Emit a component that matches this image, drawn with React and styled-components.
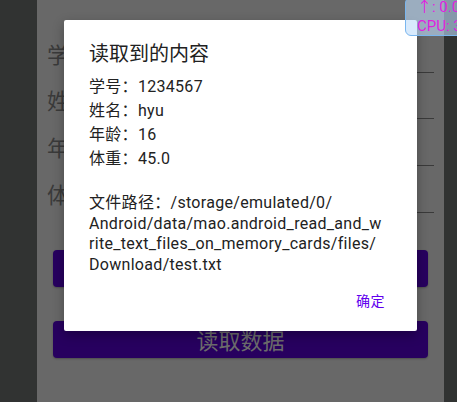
import styled, { createGlobalStyle } from 'styled-components'

const GlobalStyle = createGlobalStyle`
  html, body {
    margin: 0;
    padding: 0;
    background: #313332;
  }
  body {
    font-family: Roboto, "Noto Sans CJK SC", sans-serif;
  }
`;

const Page = styled.div`
  display: flex;
  width: 457px;
  height: 402px;
  overflow: hidden;
  position: relative;
  background: #313332;
`;

const Strip = styled.div`
  width: ${({w}) => w}px;
  flex-shrink: 0;
  background: #313332;
`;

const Screen = styled.div`
  position: relative;
  width: 407px;
  flex-shrink: 0;
  background: #686868;
  padding: 26px 10px 0;
  box-sizing: border-box;
`;

const Row = styled.div`
  display: flex;
  align-items: flex-end;
  height: 46.7px;
`;

const Label = styled.span`
  font-size: 22px;
  line-height: 22px;
  padding-bottom: 6px;
  color: #3a3a3a;
  white-space: nowrap;
`;

const Field = styled.div`
  flex: 1;
  border-bottom: 1px solid #3a3a3a;
`;

const Buttons = styled.div`
  display: flex;
  flex-direction: column;
  gap: 34px;
  margin: 37px 6px 0;
`;

const Button = styled.div`
  height: 37px;
  border-radius: 4px;
  background: #27005f;
  color: #6c6c6c;
  font-size: 22px;
  display: flex;
  align-items: center;
  justify-content: center;
  box-shadow: 0 1px 2px rgba(0,0,0,0.25);
`;

const Dialog = styled.div`
  position: absolute;
  left: 27px;
  top: 20px;
  width: 353px;
  height: 311px;
  box-sizing: border-box;
  background: #fff;
  border-radius: 2px;
  box-shadow: 0 4px 12px rgba(0,0,0,0.3);
  padding: 20px 20px 0 25px;
  display: flex;
  flex-direction: column;
`;

const Title = styled.div`
  font-size: 20px;
  line-height: 28px;
  color: #212121;
  margin-bottom: 7px;
`;

const Message = styled.div`
  font-size: 16px;
  letter-spacing: 0.3px;
  color: #222;
`;

/* Android gives lines with CJK glyphs more height than pure latin lines */
const Line = styled.div`
  white-space: nowrap;
  height: ${({h}) => h}px;
  line-height: ${({h}) => h}px;
`;

const Actions = styled.div`
  display: flex;
  justify-content: flex-end;
  margin-top: auto;
  padding: 0 12px 20px 0;
`;

const Action = styled.span`
  font-size: 14px;
  line-height: 20px;
  color: #6200ee;
  letter-spacing: 0.5px;
`;

const Monitor = styled.div`
  position: absolute;
  left: 405px;
  top: -3px;
  width: 70px;
  height: 39px;
  box-sizing: border-box;
  border: 1.5px solid #7ab6ee;
  border-radius: 6px;
  background: rgba(190, 220, 250, 0.6);
  padding: 0 0 0 11px;
  color: #e01fe0;
  font-size: 15px;
  line-height: 19px;
  white-space: nowrap;
`;

const fields = ['学号：', '姓名：', '年龄：', '体重：'];

const lines = [
  ['学号：1234567', 24],
  ['姓名：hyu', 24],
  ['年龄：16', 24],
  ['体重：45.0', 24],
  ['', 20.5],
  ['文件路径：/storage/emulated/0/', 22],
  ['Android/data/mao.android_read_and_w', 20.5],
  ['rite_text_files_on_memory_cards/files/', 20.5],
  ['Download/test.txt', 20.5],
];

export default function App() {
  return (
    <Page>
      <GlobalStyle />
      <Strip w={37} />
      <Screen>
        {fields.map(f => (
          <Row key={f}>
            <Label>{f}</Label>
            <Field />
          </Row>
        ))}
        <Buttons>
          <Button>写入数据</Button>
          <Button>读取数据</Button>
        </Buttons>
        <Dialog>
          <Title>读取到的内容</Title>
          <Message>
            {lines.map(([text, h], i) => <Line key={i} h={h}>{text}</Line>)}
          </Message>
          <Actions>
            <Action>确定</Action>
          </Actions>
        </Dialog>
      </Screen>
      <Strip w={13} />
      <Monitor>
        <div>↑: 0.00</div>
        <div>CPU: 3</div>
      </Monitor>
    </Page>
  );
}
